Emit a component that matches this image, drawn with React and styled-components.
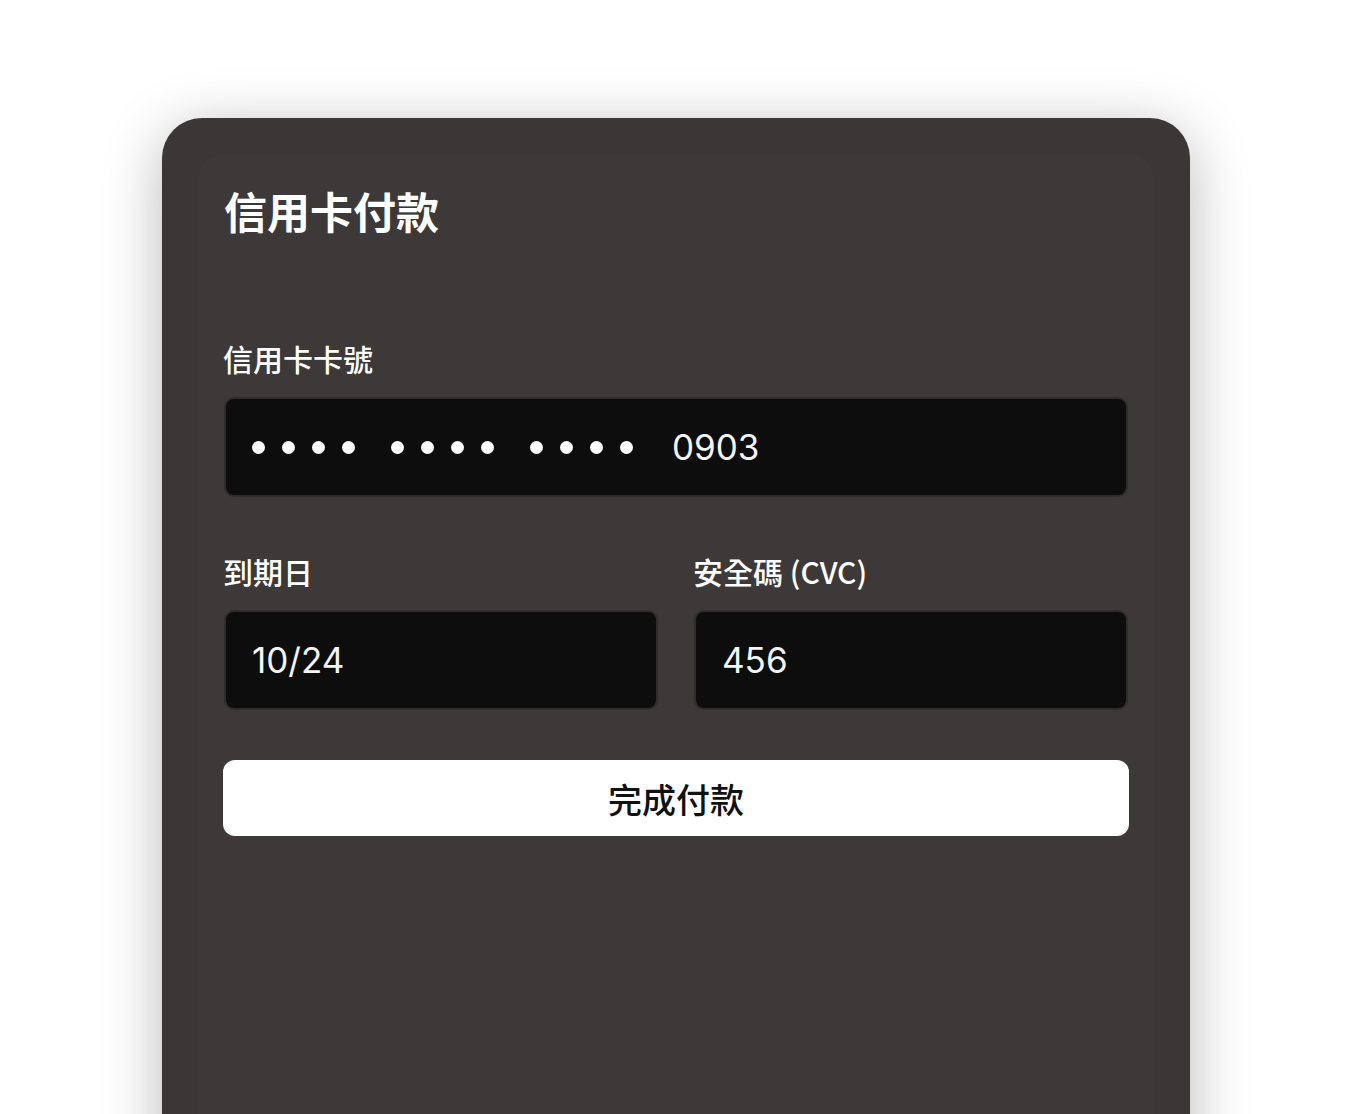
import React from "react";
import styled, { createGlobalStyle } from "styled-components";

const GlobalStyle = createGlobalStyle`
  * {
    box-sizing: border-box;
  }
  body {
    margin: 0;
    background: #ffffff;
    font-family: "Noto Sans CJK TC", "Noto Sans", sans-serif;
    overflow: hidden;
  }
`;

const Page = styled.div`
  display: flex;
  justify-content: center;
  padding-top: 118px;
  height: 1114px;
  overflow: hidden;
`;

const Card = styled.div`
  width: 1028px;
  min-height: 1100px;
  background: #3b3736;
  border-radius: 40px 40px 0 0;
  box-shadow: 0 12px 60px rgba(0, 0, 0, 0.28);
  padding: 36px 36px 0;
`;

const Panel = styled.div`
  background: #3d3938;
  border-radius: 26px 26px 0 0;
  min-height: 1000px;
  padding: 26px 26px 0;
`;

const Title = styled.h1`
  margin: 0;
  font-size: 43px;
  line-height: 60px;
  font-weight: 700;
  color: #ffffff;
`;

const Form = styled.form`
  margin-top: 98px;
  display: flex;
  flex-direction: column;
`;

const Row = styled.div`
  display: grid;
  grid-template-columns: 1fr 1fr;
  column-gap: 36px;
  margin-top: ${(p) => p.$top || 0}px;
`;

const Field = styled.div`
  display: flex;
  flex-direction: column;
`;

const Label = styled.label`
  font-size: 30px;
  line-height: 40px;
  font-weight: 500;
  color: #ffffff;
  margin-bottom: 19px;
  margin-left: -1px;
`;

const Box = styled.div`
  height: 100px;
  background: #0d0d0d;
  border: 2px solid #2f2c2b;
  border-radius: 10px;
  display: flex;
  align-items: center;
  padding-left: 26px;
  font-family: Inter, "Noto Sans", sans-serif;
  font-size: 35px;
  font-weight: 400;
  color: #f4f4f4;
`;

const Group = styled.span`
  display: inline-flex;
  margin-right: ${(p) => p.$gap}px;
`;

const Dot = styled.span`
  width: 13px;
  height: 13px;
  border-radius: 50%;
  background: #ffffff;
  margin-right: 17px;
  &:last-child {
    margin-right: 0;
  }
`;

const Submit = styled.button`
  margin-top: 50px;
  height: 76px;
  width: calc(100% + 2px);
  margin-left: -1px;
  border: none;
  border-radius: 12px;
  background: #ffffff;
  color: #111111;
  font-family: "Noto Sans CJK TC", sans-serif;
  font-size: 34px;
  font-weight: 500;
  cursor: pointer;
`;

const Masked = ({ last }) => (
  <>
    {[0, 1, 2].map((g) => (
      <Group key={g} $gap={g < 2 ? 36 : 39}>
        {[0, 1, 2, 3].map((d) => (
          <Dot key={d} />
        ))}
      </Group>
    ))}
    <span>{last}</span>
  </>
);

export default function App() {
  return (
    <>
      <GlobalStyle />
      <Page>
        <Card>
          <Panel>
            <Title>信用卡付款</Title>
            <Form onSubmit={(e) => e.preventDefault()}>
              <Field>
                <Label>信用卡卡號</Label>
                <Box>
                  <Masked last="0903" />
                </Box>
              </Field>
              <Row $top={54}>
                <Field>
                  <Label>到期日</Label>
                  <Box>10/24</Box>
                </Field>
                <Field>
                  <Label>安全碼 (CVC)</Label>
                  <Box>456</Box>
                </Field>
              </Row>
              <Submit type="submit">完成付款</Submit>
            </Form>
          </Panel>
        </Card>
      </Page>
    </>
  );
}
